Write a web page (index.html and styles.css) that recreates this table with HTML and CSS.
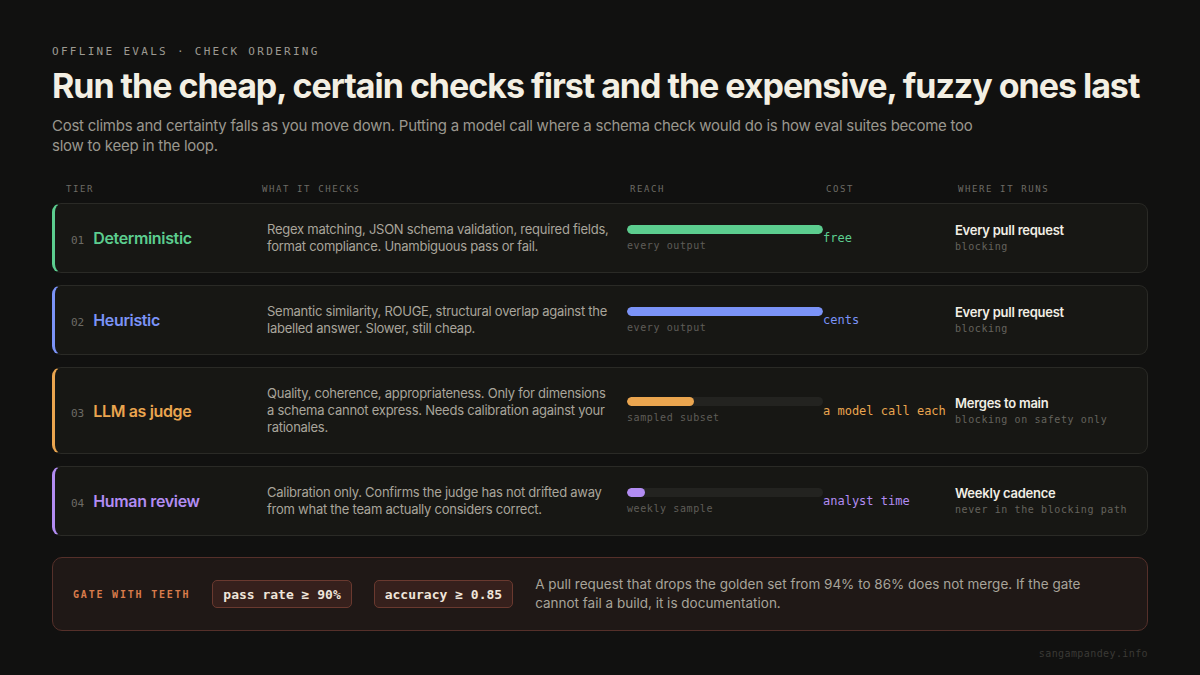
FILE: index.html
```html
<!DOCTYPE html>
<html lang="en">
<head>
<meta charset="utf-8">
<title>Check ordering</title>
<link rel="stylesheet" href="styles.css">
</head>
<body>
<main class="page">
  <div class="eyebrow">OFFLINE EVALS · CHECK ORDERING</div>
  <h1 class="title">Run the cheap, certain checks first and the expensive, fuzzy ones last</h1>
  <p class="lede">Cost climbs and certainty falls as you move down. Putting a model call where a schema check would do is how eval suites become too slow to keep in the loop.</p>

  <div class="thead">
    <span>TIER</span>
    <span>WHAT IT CHECKS</span>
    <span>REACH</span>
    <span>COST</span>
    <span>WHERE IT RUNS</span>
  </div>

  <div class="rows">
    <div class="row green">
      <div class="tier"><span class="num">01</span><span class="name">Deterministic</span></div>
      <div class="desc">Regex matching, JSON schema validation, required fields, format compliance. Unambiguous pass or fail.</div>
      <div class="reach"><div class="track"><div class="fill" style="width:100%"></div></div><div class="reach-label">every output</div></div>
      <div class="cost">free</div>
      <div class="where"><div class="where-title">Every pull request</div><div class="where-sub">blocking</div></div>
    </div>
    <div class="row blue">
      <div class="tier"><span class="num">02</span><span class="name">Heuristic</span></div>
      <div class="desc">Semantic similarity, ROUGE, structural overlap against the labelled answer. Slower, still cheap.</div>
      <div class="reach"><div class="track"><div class="fill" style="width:100%"></div></div><div class="reach-label">every output</div></div>
      <div class="cost">cents</div>
      <div class="where"><div class="where-title">Every pull request</div><div class="where-sub">blocking</div></div>
    </div>
    <div class="row orange">
      <div class="tier"><span class="num">03</span><span class="name">LLM as judge</span></div>
      <div class="desc">Quality, coherence, appropriateness. Only for dimensions a schema cannot express. Needs calibration against your rationales.</div>
      <div class="reach"><div class="track"><div class="fill" style="width:34%"></div></div><div class="reach-label">sampled subset</div></div>
      <div class="cost">a model call each</div>
      <div class="where"><div class="where-title">Merges to main</div><div class="where-sub">blocking on safety only</div></div>
    </div>
    <div class="row purple">
      <div class="tier"><span class="num">04</span><span class="name">Human review</span></div>
      <div class="desc">Calibration only. Confirms the judge has not drifted away from what the team actually considers correct.</div>
      <div class="reach"><div class="track"><div class="fill" style="width:9%"></div></div><div class="reach-label">weekly sample</div></div>
      <div class="cost">analyst time</div>
      <div class="where"><div class="where-title">Weekly cadence</div><div class="where-sub">never in the blocking path</div></div>
    </div>
  </div>

  <div class="gate">
    <div class="gate-label">GATE WITH TEETH</div>
    <div class="pill">pass rate ≥ 90%</div>
    <div class="pill">accuracy ≥ 0.85</div>
    <p class="gate-text">A pull request that drops the golden set from 94% to 86% does not merge. If the gate cannot fail a build, it is documentation.</p>
  </div>

  <div class="footer">sangampandey.info</div>
</main>
</body>
</html>
```

FILE: styles.css
```css
* { box-sizing: border-box; }
html, body { margin: 0; padding: 0; }
body {
  background: #111110;
  color: #efece3;
  font-family: Inter, "Noto Sans", sans-serif;
  width: 1200px;
  height: 675px;
  overflow: hidden;
}
.page {
  padding: 45px 52px 0 52px;
}
.eyebrow {
  font-family: "DejaVu Sans Mono", monospace;
  font-size: 11px;
  line-height: 14px;
  letter-spacing: 2.3px;
  color: #9d9a92;
}
.title {
  margin: 7px 0 0 0;
  font-size: 34px;
  line-height: 40px;
  font-weight: 700;
  letter-spacing: -1.03px;
  color: #f3efe3;
  white-space: nowrap;
}
.lede {
  margin: 10px 0 0 0;
  max-width: 940px;
  font-size: 15px;
  line-height: 20px;
  letter-spacing: -0.25px;
  color: #9a978e;
}
.thead {
  margin-top: 27px;
  display: grid;
  grid-template-columns: 196px 368px 196px 132px 1fr;
  padding-left: 14px;
  font-family: "DejaVu Sans Mono", monospace;
  font-size: 9px;
  line-height: 12px;
  letter-spacing: 1.6px;
  color: #6d6b65;
}
.rows {
  margin-top: 8px;
  display: flex;
  flex-direction: column;
  gap: 12px;
}
.row {
  display: grid;
  grid-template-columns: 196px 360px 196px 132px 1fr;
  align-items: center;
  padding: 17px 0 17px 16px;
  background: #171714;
  border: 1px solid #2a2a26;
  border-left: 3px solid var(--accent);
  border-radius: 9px;
}
.green { --accent: #5ccd8f; }
.blue { --accent: #7b93f7; }
.orange { --accent: #eaa54f; }
.purple { --accent: #b28cf2; }
.tier {
  display: flex;
  align-items: baseline;
  gap: 9px;
}
.num {
  font-family: "DejaVu Sans Mono", monospace;
  font-size: 11px;
  color: #6d6b65;
}
.name {
  font-size: 16px;
  font-weight: 600;
  color: var(--accent);
  letter-spacing: -0.35px;
}
.desc {
  padding-right: 12px;
  font-size: 13px;
  line-height: 17px;
  letter-spacing: -0.25px;
  color: #a9a59b;
}
.reach {
  display: flex;
  flex-direction: column;
}
.track {
  height: 9px;
  border-radius: 5px;
  background: #232320;
  overflow: hidden;
}
.fill {
  height: 100%;
  border-radius: 5px;
  background: var(--accent);
}
.reach-label {
  margin-top: 6px;
  font-family: "DejaVu Sans Mono", monospace;
  font-size: 10px;
  line-height: 12px;
  letter-spacing: 0.6px;
  color: #5f5d58;
}
.cost {
  font-family: "DejaVu Sans Mono", monospace;
  font-size: 12px;
  line-height: 16px;
  color: var(--accent);
  white-space: nowrap;
}
.where-title {
  font-size: 13px;
  line-height: 18px;
  font-weight: 600;
  letter-spacing: -0.25px;
  color: #f1eee5;
}
.where-sub {
  font-family: "DejaVu Sans Mono", monospace;
  font-size: 10px;
  line-height: 16px;
  letter-spacing: 0.6px;
  color: #65635d;
}
.gate {
  margin-top: 21px;
  display: flex;
  align-items: center;
  gap: 22px;
  height: 74px;
  padding: 0 20px;
  background: #1f1816;
  border: 1px solid #55302a;
  border-radius: 10px;
}
.gate-label {
  font-family: "DejaVu Sans Mono", monospace;
  font-size: 10px;
  font-weight: 700;
  letter-spacing: 1.8px;
  color: #d97b4b;
  white-space: nowrap;
}
.pill {
  height: 28px;
  display: flex;
  align-items: center;
  padding: 0 10px;
  background: #36201c;
  border: 1px solid #6a392f;
  border-radius: 5px;
  font-family: "DejaVu Sans Mono", monospace;
  font-size: 13px;
  font-weight: 700;
  color: #efe5da;
  white-space: nowrap;
}
.gate-text {
  margin: 0;
  max-width: 560px;
  font-size: 13.5px;
  line-height: 19px;
  color: #a8a49a;
}
.footer {
  margin-top: 16px;
  text-align: right;
  font-family: "DejaVu Sans Mono", monospace;
  font-size: 10px;
  line-height: 14px;
  letter-spacing: 0.4px;
  color: #3b3a36;
}
```
